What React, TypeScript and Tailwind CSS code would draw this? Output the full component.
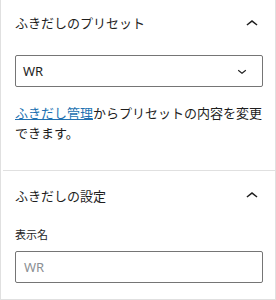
import React from 'react';

const ChevronUp = () => (
  <svg width="24" height="24" viewBox="0 0 24 24" className="shrink-0 fill-[#1e1e1e]">
    <path d="M6.5 12.4L12 8l5.5 4.4-.9 1.2L12 10l-4.6 3.6-1-1.2z" />
  </svg>
);

const ChevronDown = () => (
  <svg width="18" height="18" viewBox="0 0 24 24" className="fill-[#1e1e1e]">
    <path d="M17.5 11.6L12 16l-5.5-4.4.9-1.2L12 14l4.6-3.6 1 1.2z" />
  </svg>
);

export default function App() {
  return (
    <div
      className="w-[276px] h-[300px] bg-white border-x border-b border-[#e0e0e0] text-[#1e1e1e] overflow-hidden"
      style={{ fontFamily: '"Noto Sans", "Noto Sans CJK JP", sans-serif' }}
    >
      <section className="pl-[14px] pb-[27px]">
        <div className="w-[248px] h-[46px] flex items-center justify-between">
          <h2 className="text-[13px] leading-5 font-normal">ふきだしのプリセット</h2>
          <span className="-mr-[1px] mt-[1px]">
            <ChevronUp />
          </span>
        </div>
        <div className="mt-[9px] w-[248px] h-[32px] border border-[#757575] rounded-[2px] flex items-center justify-between pl-[7px] pr-[11px]">
          <span className="text-[13px] leading-5">WR</span>
          <ChevronDown />
        </div>
        <p className="mt-[16px] w-[250px] text-[13px] leading-5">
          <span className="text-[#2271b1] underline">ふきだし管理</span>からプリセットの内容を変更できます。
        </p>
      </section>
      <section className="ml-[2px] pl-[12px] border-t border-[#e0e0e0]">
        <div className="w-[248px] h-[50px] flex items-center justify-between">
          <h2 className="text-[13px] leading-5 font-normal">ふきだしの設定</h2>
          <span className="-mr-[1px]">
            <ChevronUp />
          </span>
        </div>
        <label className="block mt-[6px] text-[11px] leading-4">表示名</label>
        <div className="mt-[8px] w-[248px] h-[32px] border border-[#757575] rounded-[2px] flex items-center pl-[8px]">
          <span className="text-[13px] leading-5 text-[#8c8f94]">WR</span>
        </div>
      </section>
    </div>
  );
}
